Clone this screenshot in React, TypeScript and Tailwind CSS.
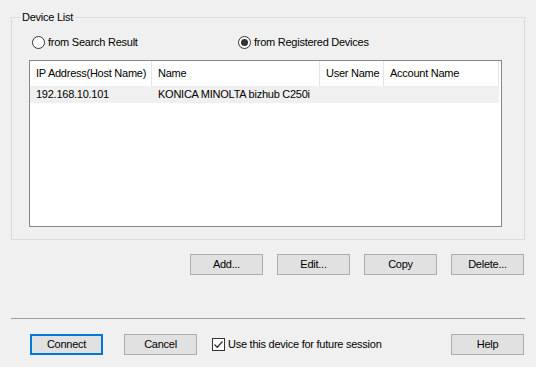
const font = "font-['Liberation_Sans',Arial,sans-serif]";

function Button({ label, primary = false }: { label: string; primary?: boolean }) {
  return (
    <div
      className={`w-[73px] h-[21px] flex items-center justify-center bg-[#e1e1e1] text-black ${
        primary ? "border-2 border-[#0078d7]" : "border border-[#adadad]"
      }`}
    >
      {label}
    </div>
  );
}

function Radio({ checked, label }: { checked?: boolean; label: string }) {
  return (
    <div className="flex items-center gap-[3px]">
      <div className="w-[13px] h-[13px] rounded-full border border-[#333] bg-white flex items-center justify-center">
        {checked && <div className="w-[7px] h-[7px] rounded-full bg-[#333]" />}
      </div>
      <span className="whitespace-nowrap">{label}</span>
    </div>
  );
}

const cols = [
  { name: "IP Address(Host Name)", w: "w-[122px]" },
  { name: "Name", w: "w-[168px]" },
  { name: "User Name", w: "w-[64px]" },
  { name: "Account Name", w: "w-[115px]" },
];

export default function App() {
  return (
    <div className={`w-[536px] h-[367px] bg-[#f0f0f0] text-[11px] tracking-[-0.25px] text-black ${font} flex flex-col`}>
      {/* Device List group */}
      <div className="relative mt-[17px] ml-[11px] w-[514px] h-[223px] border border-[#dcdcdc] flex flex-col">
        <span className="absolute -top-[8px] left-[8px] px-[2px] bg-[#f0f0f0] leading-[14px]">Device List</span>
        <div className="flex items-center mt-[17px] ml-[20px] h-[14px]">
          <div className="w-[206px]">
            <Radio label="from Search Result" />
          </div>
          <Radio checked label="from Registered Devices" />
        </div>
        <div className="mt-[11px] ml-[17px] w-[473px] h-[167px] border border-[#828790] bg-white">
          <div className="flex h-[25px]">
            {cols.map((c) => (
              <div
                key={c.name}
                className={`${c.w} h-full flex items-center px-[6px] border-r border-[#e5e5e5] whitespace-nowrap`}
              >
                {c.name}
              </div>
            ))}
          </div>
          <div className="flex h-[17px] bg-[#f0f0f0] items-center w-[469px]">
            <div className="w-[122px] px-[6px] whitespace-nowrap">192.168.10.101</div>
            <div className="w-[168px] px-[6px] whitespace-nowrap">KONICA MINOLTA bizhub C250i</div>
          </div>
        </div>
      </div>

      {/* List buttons */}
      <div className="flex justify-end gap-[14px] mt-[14px] mr-[12px]">
        <Button label="Add..." />
        <Button label="Edit..." />
        <Button label="Copy" />
        <Button label="Delete..." />
      </div>

      {/* Separator */}
      <div className="mt-[43px] ml-[11px] w-[514px] h-px bg-[#a0a0a0]" />

      {/* Bottom row */}
      <div className="flex items-center mt-[15px] ml-[30px] h-[21px]">
        <Button label="Connect" primary />
        <div className="ml-[21px]">
          <Button label="Cancel" />
        </div>
        <div className="ml-[15px] flex items-center gap-[3px]">
          <div className="w-[13px] h-[13px] border border-[#333] bg-white flex items-center justify-center">
            <svg width="11" height="11" viewBox="0 0 11 11">
              <path d="M1.5 5.5 L4.2 8.2 L9.5 2.5" fill="none" stroke="#333" strokeWidth="1.3" />
            </svg>
          </div>
          <span className="whitespace-nowrap">Use this device for future session</span>
        </div>
        <div className="ml-auto mr-[12px]">
          <Button label="Help" />
        </div>
      </div>
    </div>
  );
}
